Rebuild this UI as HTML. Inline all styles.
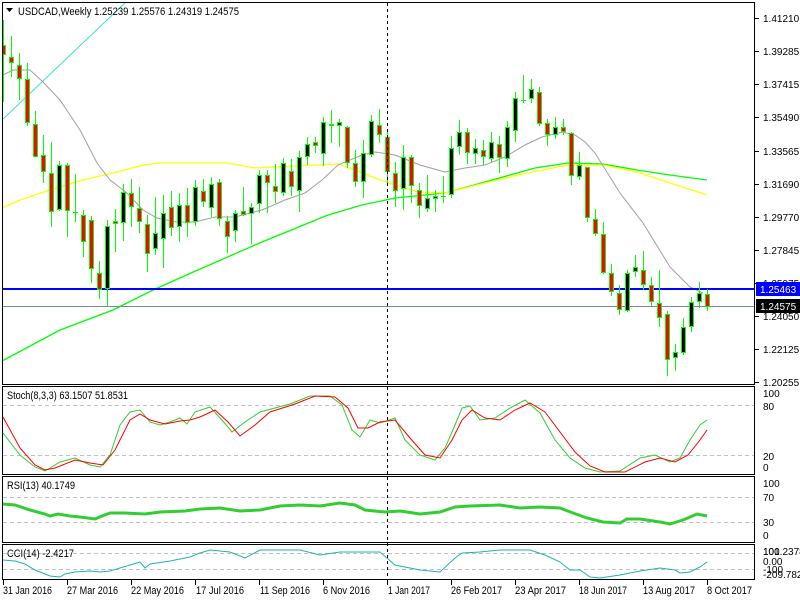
<!DOCTYPE html>
<html><head><meta charset="utf-8"><style>
html,body{margin:0;padding:0;background:#fff;width:800px;height:600px;overflow:hidden}
svg{display:block;font-family:"Liberation Sans",sans-serif;font-size:10px}
.r{fill:#f00;stroke:#0f0;stroke-width:1}
.b{fill:#000;stroke:#0f0;stroke-width:1}
</style></head><body>
<svg width="800" height="600" viewBox="0 0 800 600" xmlns="http://www.w3.org/2000/svg">
<rect width="800" height="600" fill="#fff"/>
<defs><clipPath id="mc"><rect x="2" y="2" width="753" height="382"/></clipPath></defs>
<g clip-path="url(#mc)">
<path d="M2 120L128 0" stroke="#40e0d0" fill="none"/>
<path d="M2 361L60 330L113 310L153 290L200 269L262 242L328 215L362 205L395 198L445 193L485 182L535 168L568 163L603 164L637 170L670 175L707 180" stroke="#00ff00" fill="none" stroke-width="1.3"/>
<path d="M2 208L20 200L50 190L83 180L117 172L143 165L160 163L228 163L255 168L295 166L338 164L355 170L375 178L395 185L418 192L445 193L485 183L518 175L568 165L603 165L637 172L670 183L707 195" stroke="#ffff00" fill="none" stroke-width="1.3"/>
<path d="M3 75L13 70L30 70L43 82L60 100L80 130L97 163L110 180L127 193L143 210L157 218L177 222L195 222L215 217L235 217L262 210L285 200L305 193L322 180L338 165L362 155L375 152L395 155L420 165L445 172L465 168L485 165L505 157L525 145L542 137L562 132L575 135L585 142L595 153L620 193L643 223L670 267L690 287L703 293" stroke="#a0a0a0" fill="none"/>
<line x1="2" y1="306.5" x2="755" y2="306.5" stroke="#778899"/>
<line x1="2" y1="289" x2="755" y2="289" stroke="#0000ff" stroke-width="2"/>
<path stroke="#0f0" fill="none" d="M3.5 20V102M11.5 36V77M19.5 53V100M27.5 63V126M35.5 111V157M43.5 135V183M51.5 142V227M59.5 161V211M67.5 163V237M75.5 174V222M83.5 210V257M91.5 216V283M99.5 261V299M107.5 220V306M115.5 209V252M123.5 184V241M131.5 179V227M139.5 187V233M147.5 215V272M155.5 197V255M163.5 195V268M171.5 191V236M179.5 193V242M187.5 188V237M195.5 180V226M203.5 179V207M211.5 177V217M219.5 179V226M227.5 216V253M235.5 210V242M243.5 187V216M251.5 203V244M259.5 170V213M267.5 170V213M275.5 164V203M283.5 158V196M291.5 159V196M299.5 151V212M307.5 137V165M315.5 137V153M323.5 117V166M331.5 110V143M339.5 119V147M347.5 126V168M355.5 150V187M363.5 140V198M371.5 115V157M379.5 109V143M387.5 132V183M395.5 162V207M403.5 145V210M411.5 155V203M419.5 183V218M427.5 175V212M435.5 190V212M443.5 176V203M451.5 136V198M459.5 120V155M467.5 128V164M475.5 139V164M483.5 140V165M491.5 132V162M499.5 136V173M507.5 121V167M515.5 92V142M523.5 75V103M531.5 79V103M539.5 87V126M547.5 119V146M555.5 117V139M563.5 119V135M571.5 132V185M579.5 152V180M587.5 167V222M595.5 209V236M603.5 222V274M611.5 264V296M619.5 285V315M627.5 270V312M635.5 255V277M643.5 251V290M651.5 277V306M659.5 270V327M667.5 311V376M675.5 344V371M683.5 318V355M691.5 297V332M699.5 282V308M707.5 289V311"/>
<path stroke="#0f0" d="M73 212.5H78M441 196.5H446M521 100.5H526"/>
<rect class="r" x="1.5" y="45.5" width="4" height="9"/>
<rect class="r" x="9.5" y="57.5" width="4" height="5"/>
<rect class="r" x="17.5" y="65.5" width="4" height="13"/>
<rect class="r" x="25.5" y="79.5" width="4" height="43"/>
<rect class="r" x="33.5" y="124.5" width="4" height="32"/>
<rect class="r" x="41.5" y="155.5" width="4" height="16"/>
<rect class="r" x="49.5" y="173.5" width="4" height="38"/>
<rect class="b" x="57.5" y="165.5" width="4" height="44"/>
<rect class="r" x="65.5" y="165.5" width="4" height="45"/>
<rect class="r" x="81.5" y="215.5" width="4" height="26"/>
<rect class="r" x="89.5" y="220.5" width="4" height="48"/>
<rect class="r" x="97.5" y="273.5" width="4" height="16"/>
<rect class="b" x="105.5" y="226.5" width="4" height="62"/>
<rect class="r" x="113.5" y="221.5" width="4" height="2"/>
<rect class="b" x="121.5" y="192.5" width="4" height="30"/>
<rect class="r" x="129.5" y="193.5" width="4" height="13"/>
<rect class="r" x="137.5" y="208.5" width="4" height="13"/>
<rect class="r" x="145.5" y="224.5" width="4" height="29"/>
<rect class="b" x="153.5" y="233.5" width="4" height="15"/>
<rect class="b" x="161.5" y="213.5" width="4" height="25"/>
<rect class="r" x="169.5" y="207.5" width="4" height="20"/>
<rect class="b" x="177.5" y="205.5" width="4" height="21"/>
<rect class="r" x="185.5" y="205.5" width="4" height="17"/>
<rect class="b" x="193.5" y="187.5" width="4" height="34"/>
<rect class="r" x="201.5" y="191.5" width="4" height="10"/>
<rect class="b" x="209.5" y="184.5" width="4" height="23"/>
<rect class="r" x="217.5" y="182.5" width="4" height="36"/>
<rect class="r" x="225.5" y="221.5" width="4" height="15"/>
<rect class="b" x="233.5" y="213.5" width="4" height="17"/>
<rect class="r" x="241.5" y="211.5" width="4" height="3"/>
<rect class="b" x="249.5" y="207.5" width="4" height="6"/>
<rect class="b" x="257.5" y="175.5" width="4" height="28"/>
<rect class="r" x="265.5" y="175.5" width="4" height="7"/>
<rect class="r" x="273.5" y="186.5" width="4" height="5"/>
<rect class="b" x="281.5" y="163.5" width="4" height="29"/>
<rect class="r" x="289.5" y="171.5" width="4" height="15"/>
<rect class="b" x="297.5" y="157.5" width="4" height="33"/>
<rect class="b" x="305.5" y="144.5" width="4" height="12"/>
<rect class="r" x="313.5" y="142.5" width="4" height="3"/>
<rect class="b" x="321.5" y="122.5" width="4" height="31"/>
<rect class="b" x="329.5" y="124.5" width="4" height="1"/>
<rect class="b" x="337.5" y="122.5" width="4" height="3"/>
<rect class="r" x="345.5" y="127.5" width="4" height="35"/>
<rect class="r" x="353.5" y="163.5" width="4" height="18"/>
<rect class="b" x="361.5" y="153.5" width="4" height="28"/>
<rect class="b" x="369.5" y="121.5" width="4" height="33"/>
<rect class="r" x="377.5" y="125.5" width="4" height="9"/>
<rect class="r" x="385.5" y="137.5" width="4" height="34"/>
<rect class="r" x="393.5" y="173.5" width="4" height="17"/>
<rect class="b" x="401.5" y="157.5" width="4" height="31"/>
<rect class="r" x="409.5" y="157.5" width="4" height="28"/>
<rect class="r" x="417.5" y="190.5" width="4" height="15"/>
<rect class="b" x="425.5" y="198.5" width="4" height="10"/>
<rect class="b" x="433.5" y="196.5" width="4" height="2"/>
<rect class="b" x="449.5" y="148.5" width="4" height="46"/>
<rect class="b" x="457.5" y="132.5" width="4" height="14"/>
<rect class="r" x="465.5" y="132.5" width="4" height="20"/>
<rect class="b" x="473.5" y="148.5" width="4" height="5"/>
<rect class="r" x="481.5" y="150.5" width="4" height="6"/>
<rect class="b" x="489.5" y="142.5" width="4" height="16"/>
<rect class="r" x="497.5" y="144.5" width="4" height="13"/>
<rect class="b" x="505.5" y="127.5" width="4" height="31"/>
<rect class="b" x="513.5" y="98.5" width="4" height="32"/>
<rect class="b" x="529.5" y="89.5" width="4" height="9"/>
<rect class="r" x="537.5" y="92.5" width="4" height="31"/>
<rect class="r" x="545.5" y="123.5" width="4" height="11"/>
<rect class="b" x="553.5" y="127.5" width="4" height="7"/>
<rect class="r" x="561.5" y="127.5" width="4" height="4"/>
<rect class="r" x="569.5" y="133.5" width="4" height="42"/>
<rect class="b" x="577.5" y="165.5" width="4" height="11"/>
<rect class="r" x="585.5" y="167.5" width="4" height="50"/>
<rect class="r" x="593.5" y="219.5" width="4" height="14"/>
<rect class="r" x="601.5" y="234.5" width="4" height="38"/>
<rect class="r" x="609.5" y="273.5" width="4" height="18"/>
<rect class="r" x="617.5" y="293.5" width="4" height="16"/>
<rect class="b" x="625.5" y="273.5" width="4" height="37"/>
<rect class="b" x="633.5" y="267.5" width="4" height="4"/>
<rect class="r" x="641.5" y="270.5" width="4" height="14"/>
<rect class="r" x="649.5" y="285.5" width="4" height="16"/>
<rect class="r" x="657.5" y="303.5" width="4" height="14"/>
<rect class="r" x="665.5" y="314.5" width="4" height="45"/>
<rect class="b" x="673.5" y="352.5" width="4" height="5"/>
<rect class="b" x="681.5" y="327.5" width="4" height="25"/>
<rect class="b" x="689.5" y="302.5" width="4" height="24"/>
<rect class="b" x="697.5" y="293.5" width="4" height="8"/>
<rect class="r" x="705.5" y="294.5" width="4" height="12"/>
</g>
<g fill="none" stroke="#000">
<rect x="2.5" y="2.5" width="752" height="382"/>
<rect x="2.5" y="386.5" width="752" height="88"/>
<rect x="2.5" y="476.5" width="752" height="66"/>
<rect x="2.5" y="544.5" width="752" height="35"/>
</g>
<g stroke="#c0c0c0" stroke-dasharray="4,3">
<line x1="3" y1="405.5" x2="754" y2="405.5"/>
<line x1="3" y1="455.5" x2="754" y2="455.5"/>
<line x1="3" y1="497.5" x2="754" y2="497.5"/>
<line x1="3" y1="522.5" x2="754" y2="522.5"/>
<line x1="3" y1="553.5" x2="754" y2="553.5"/>
<line x1="3" y1="569.5" x2="754" y2="569.5"/>
</g>
<line x1="387.5" y1="3" x2="387.5" y2="580" stroke="#000" stroke-dasharray="3,3"/>
<path fill="none" stroke="#32cd32" d="M3 433L20 455L35 467L45 471L60 462L75 458L90 465L100 467L110 455L120 425L130 412L140 410L150 422L160 425L170 422L180 418L187 424L195 412L210 407L222 420L232 432L245 422L260 412L290 404L310 396L330 396L342 405L352 430L360 437L370 420L380 423L395 418L405 440L420 455L435 460L445 448L455 425L462 408L470 406L480 420L495 418L510 408L525 400L540 413L555 440L570 458L585 468L600 472L620 471L640 458L655 455L670 462L680 458L690 440L700 425L707 420"/>
<path fill="none" stroke="#f00" d="M3 417L20 448L35 465L45 470L55 468L75 460L90 463L103 465L115 450L130 420L140 414L150 420L165 424L180 421L190 420L200 417L215 410L228 422L240 436L255 425L270 412L295 404L315 396L335 397L348 408L358 428L368 428L380 422L395 420L410 438L425 455L440 458L452 440L462 420L472 410L485 418L500 420L515 410L530 403L545 412L560 432L575 452L590 466L605 472L625 472L645 462L660 458L675 462L688 455L700 440L707 430"/>
<path fill="none" stroke="#32cd32" stroke-width="3" d="M3 504L15 505L30 510L45 514L50 516L58 514L70 516L80 517L95 519L102 516L110 513L125 513L145 514L160 512L185 511L200 509L220 508L240 511L260 510L280 506L300 505L320 506L340 503L355 505L365 510L385 512L400 511L420 514L440 512L455 507L470 506L500 505L520 508L540 507L560 508L573 513L587 518L603 522L620 523L627 519L640 519L660 522L670 524L683 520L697 514L707 516"/>
<path fill="none" stroke="#20b2aa" d="M3 560L15 561L25 564L35 570L50 576L60 577L65 574L75 572L90 571L100 572L110 571L130 565L140 562L145 568L150 564L170 561L190 557L200 553L210 550L230 552L245 558L260 550L300 550L320 555L340 552L380 552L395 565L420 570L440 572L455 558L462 553L480 552L500 550L530 550L545 555L560 562L570 570L580 570L590 577L600 578L620 575L640 571L660 568L675 570L680 573L690 572L700 567L707 562"/>
<path d="M6 8H13L9.5 12Z" fill="#000"/>
<text x="18" y="15" fill="#000" font-size="11" textLength="221" lengthAdjust="spacingAndGlyphs">USDCAD,Weekly  1.25239 1.25576 1.24319 1.24575</text>
<text x="7" y="399" font-size="11" textLength="121" lengthAdjust="spacingAndGlyphs">Stoch(8,3,3) 63.1507 51.8531</text>
<text x="7" y="489" font-size="11" textLength="68" lengthAdjust="spacingAndGlyphs">RSI(13) 40.1749</text>
<text x="7" y="557" font-size="11" textLength="67" lengthAdjust="spacingAndGlyphs">CCI(14) -2.4217</text>
<path stroke="#000" d="M755 18.5H759M755 51.5H759M755 84.5H759M755 117.5H759M755 151.5H759M755 184.5H759M755 217.5H759M755 250.5H759M755 283.5H759M755 316.5H759M755 349.5H759M755 382.5H759"/>
<g fill="#000">
<text x="763" y="22">1.41210</text>
<text x="763" y="55">1.39285</text>
<text x="763" y="88">1.37415</text>
<text x="763" y="121">1.35490</text>
<text x="763" y="155">1.33565</text>
<text x="763" y="188">1.31690</text>
<text x="763" y="221">1.29770</text>
<text x="763" y="254">1.27845</text>
<text x="763" y="287">1.25975</text>
<text x="763" y="320">1.24050</text>
<text x="763" y="353">1.22125</text>
<text x="763" y="386">1.20255</text>
<text x="763" y="397">100</text>
<text x="763" y="410">80</text>
<text x="763" y="460">20</text>
<text x="763" y="471">0</text>
<text x="763" y="487">100</text>
<text x="763" y="501">70</text>
<text x="763" y="526">30</text>
<text x="763" y="539">0</text>
<text x="763" y="555">101.2378</text>
<text x="763" y="555">100</text>
<text x="763" y="565">0.00</text>
<text x="763" y="573">-100</text>
<text x="763" y="578">-209.7829</text>
</g>
<rect x="756" y="282" width="44" height="14" fill="#0000ff"/>
<text x="760" y="293" fill="#fff">1.25463</text>
<rect x="756" y="299" width="44" height="14" fill="#000"/>
<text x="760" y="310" fill="#fff">1.24575</text>
<path stroke="#000" d="M3.5 580V585M67.5 580V585M131.5 580V585M195.5 580V585M259.5 580V585M323.5 580V585M387.5 580V585M451.5 580V585M515.5 580V585M579.5 580V585M643.5 580V585M707.5 580V585"/>
<g fill="#000" font-size="11">
<text x="3" y="594" textLength="49" lengthAdjust="spacingAndGlyphs">31 Jan 2016</text>
<text x="67" y="594" textLength="51" lengthAdjust="spacingAndGlyphs">27 Mar 2016</text>
<text x="131" y="594" textLength="53" lengthAdjust="spacingAndGlyphs">22 May 2016</text>
<text x="196" y="594" textLength="48" lengthAdjust="spacingAndGlyphs">17 Jul 2016</text>
<text x="260" y="594" textLength="50" lengthAdjust="spacingAndGlyphs">11 Sep 2016</text>
<text x="323" y="594" textLength="47" lengthAdjust="spacingAndGlyphs">6 Nov 2016</text>
<text x="388" y="594" textLength="42" lengthAdjust="spacingAndGlyphs">1 Jan 2017</text>
<text x="451" y="594" textLength="51" lengthAdjust="spacingAndGlyphs">26 Feb 2017</text>
<text x="515" y="594" textLength="51" lengthAdjust="spacingAndGlyphs">23 Apr 2017</text>
<text x="579" y="594" textLength="48" lengthAdjust="spacingAndGlyphs">18 Jun 2017</text>
<text x="643" y="594" textLength="52" lengthAdjust="spacingAndGlyphs">13 Aug 2017</text>
<text x="707" y="594" textLength="45" lengthAdjust="spacingAndGlyphs">8 Oct 2017</text>
</g>
</svg>
</body></html>
